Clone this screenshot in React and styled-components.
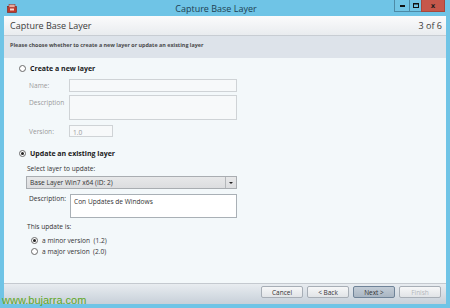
import React from "react";
import styled, { createGlobalStyle } from "styled-components";

const Global = createGlobalStyle`
  html, body { margin: 0; padding: 0; width: 450px; height: 308px; overflow: hidden; background: #6fc4e6; }
  body { font-family: "Open Sans", "Noto Sans", sans-serif; }
`;

const Frame = styled.div`
  width: 450px;
  height: 308px;
  box-sizing: border-box;
  background: #6fc4e6;
  display: flex;
  flex-direction: column;
  padding: 0 4px 4px 4px;
  position: relative;
`;

const TitleBar = styled.div`
  height: 16px;
  display: flex;
  align-items: center;
  color: #1e3f52;
  font-size: 9px;
`;

const TitleText = styled.div`
  flex: 1;
  text-align: center;
  padding-left: 20px;
`;

const AppIcon = styled.div`
  width: 10px;
  height: 9px;
  margin-left: 3px;
  display: flex;
`;

const WinButtons = styled.div`
  display: flex;
  align-self: flex-start;
  margin-right: 1px;
`;

const WinBtn = styled.div`
  width: ${(p) => p.w}px;
  height: 12px;
  box-sizing: border-box;
  background: ${(p) => (p.close ? "#c6574a" : "#72c5e5")};
  border: 1px solid ${(p) => (p.close ? "#a8473c" : "#4d8aa6")};
  border-top: none;
  margin-left: -1px;
  display: flex;
  align-items: center;
  justify-content: center;
  color: #1d1d1d;
  font-size: 7px;
  font-weight: bold;
  font-family: "DejaVu Sans", sans-serif;
`;

const Panel = styled.div`
  flex: 1;
  display: flex;
  flex-direction: column;
  background: #f3f8fa;
  min-height: 0;
`;

const Header = styled.div`
  height: 19px;
  display: flex;
  align-items: center;
  justify-content: space-between;
  padding: 0 4px 0 6px;
  background: linear-gradient(#fbfbfc, #e9ecef);
  border-bottom: 1px solid #c8cdd3;
  color: #3b3b3b;
  font-size: 9px;
`;

const SubHeader = styled.div`
  height: 22px;
  background: #dde3ea;
  padding: 5px 0 0 6px;
  box-sizing: border-box;
  font-size: 5.4px;
  font-weight: bold;
  color: #4a4a4a;
`;

const Content = styled.div`
  flex: 1;
  padding: 5px 0 0 15px;
  display: flex;
  flex-direction: column;
  font-size: 6.6px;
  color: #222;
`;

const RadioRow = styled.label`
  display: flex;
  align-items: center;
  gap: 4px;
  height: 10px;
  font-weight: ${(p) => (p.bold ? 700 : 400)};
  font-size: ${(p) => (p.bold ? 7 : 6.6)}px;
  color: ${(p) => (p.bold ? "#1a1a1a" : "#333")};
  margin-left: ${(p) => p.indent || 0}px;
  margin-top: ${(p) => p.mt || 0}px;
`;

const RadioDot = styled.span`
  width: 5px;
  height: 5px;
  border-radius: 50%;
  border: 0.8px solid #6a6a6a;
  background: #fff;
  display: flex;
  align-items: center;
  justify-content: center;
  flex-shrink: 0;
  &::after {
    content: "";
    width: 3px;
    height: 3px;
    border-radius: 50%;
    background: ${(p) => (p.checked ? "#222" : "transparent")};
  }
`;

const FieldRow = styled.div`
  display: flex;
  align-items: ${(p) => (p.top ? "flex-start" : "center")};
  margin-left: ${(p) => p.indent}px;
  margin-top: ${(p) => p.mt || 0}px;
`;

const FieldLabel = styled.div`
  width: ${(p) => p.w}px;
  color: ${(p) => (p.disabled ? "#9a9a9a" : "#333")};
  padding-top: ${(p) => (p.top ? 3 : 0)}px;
  flex-shrink: 0;
`;

const Box = styled.div`
  width: ${(p) => p.w}px;
  height: ${(p) => p.h}px;
  box-sizing: border-box;
  border: 1px solid ${(p) => (p.disabled ? "#cfd3d6" : "#a9b0b6")};
  background: ${(p) => (p.disabled ? "#f7f9fa" : "#fff")};
  color: ${(p) => (p.disabled ? "#9a9a9a" : "#333")};
  padding: 2px 3px;
  font-size: 6.6px;
`;

const Plain = styled.div`
  margin-left: ${(p) => p.indent}px;
  margin-top: ${(p) => p.mt || 0}px;
  color: #333;
`;

const Select = styled.div`
  margin-left: 7px;
  margin-top: 3px;
  width: 211px;
  height: 13px;
  box-sizing: border-box;
  border: 1px solid #a9adb1;
  background: linear-gradient(#e7e8e9, #dcdddf);
  display: flex;
  align-items: center;
  color: #333;
`;

const SelectText = styled.div`
  flex: 1;
  padding-left: 3px;
`;

const SelectArrow = styled.div`
  width: 10px;
  height: 100%;
  border-left: 1px solid #b4b7ba;
  display: flex;
  align-items: center;
  justify-content: center;
  &::after {
    content: "";
    border-left: 2px solid transparent;
    border-right: 2px solid transparent;
    border-top: 2.5px solid #222;
  }
`;

const Footer = styled.div`
  height: 18px;
  border-top: 1px solid #c4c9cf;
  background: linear-gradient(#e8ecf0, #c7d0d9);
  display: flex;
  align-items: flex-start;
  justify-content: flex-end;
  padding: 2px 5px 0 0;
  gap: 4px;
`;

const Btn = styled.div`
  width: 42px;
  height: 12px;
  box-sizing: border-box;
  border: 1px solid ${(p) => (p.primary ? "#6f8398" : "#a7aeb6")};
  border-radius: 2px;
  background: ${(p) =>
    p.primary
      ? "linear-gradient(#c2ccd6, #a9b6c3)"
      : "linear-gradient(#f6f7f8, #e1e4e7)"};
  color: ${(p) => (p.disabled ? "#b3b7bb" : "#333")};
  font-size: 6.5px;
  display: flex;
  align-items: center;
  justify-content: center;
`;

const Watermark = styled.div`
  position: absolute;
  left: 2px;
  bottom: 1px;
  color: #5ea726;
  font-family: "Liberation Sans", "DejaVu Sans", sans-serif;
  font-size: 11px;
  line-height: 13px;
`;

export default function App() {
  return (
    <>
      <Global />
      <Frame>
        <TitleBar>
          <AppIcon>
            <svg width="10" height="9" viewBox="0 0 10 9">
              <rect x="0.5" y="2.5" width="9" height="6" fill="#c0392b" stroke="#7d1f15" strokeWidth="0.6" />
              <rect x="2" y="0.5" width="6" height="3" fill="#e8a89c" stroke="#8d2b20" strokeWidth="0.5" />
              <rect x="3" y="4.5" width="4" height="2" fill="#f3d4ce" />
            </svg>
          </AppIcon>
          <TitleText>Capture Base Layer</TitleText>
          <WinButtons>
            <WinBtn w={16}>
              <svg width="5" height="2"><rect width="5" height="2" fill="#111" /></svg>
            </WinBtn>
            <WinBtn w={13}>
              <svg width="6" height="5"><rect x="0.5" y="0.5" width="5" height="4" fill="none" stroke="#111" strokeWidth="1" /><rect x="0" y="0" width="6" height="1.5" fill="#111" /></svg>
            </WinBtn>
            <WinBtn w={24} close>x</WinBtn>
          </WinButtons>
        </TitleBar>
        <Panel>
          <Header>
            <span>Capture Base Layer</span>
            <span>3 of 6</span>
          </Header>
          <SubHeader>Please choose whether to create a new layer or update an existing layer</SubHeader>
          <Content>
            <RadioRow bold>
              <RadioDot />
              Create a new layer
            </RadioRow>
            <FieldRow indent={10} mt={6}>
              <FieldLabel w={40} disabled>Name:</FieldLabel>
              <Box w={168} h={13} disabled />
            </FieldRow>
            <FieldRow indent={10} mt={3} top>
              <FieldLabel w={40} disabled top>Description</FieldLabel>
              <Box w={168} h={25} disabled />
            </FieldRow>
            <FieldRow indent={10} mt={5}>
              <FieldLabel w={40} disabled>Version:</FieldLabel>
              <Box w={44} h={12} disabled>1.0</Box>
            </FieldRow>
            <RadioRow bold mt={11}>
              <RadioDot checked />
              Update an existing layer
            </RadioRow>
            <Plain indent={8} mt={6}>Select layer to update:</Plain>
            <Select>
              <SelectText>Base Layer Win7 x64 (ID: 2)</SelectText>
              <SelectArrow />
            </Select>
            <FieldRow indent={10} mt={5} top>
              <FieldLabel w={41} top={false}>Description:</FieldLabel>
              <Box w={167} h={24}>Con Updates de Windows</Box>
            </FieldRow>
            <Plain indent={8} mt={4}>This update is:</Plain>
            <RadioRow indent={12} mt={4}>
              <RadioDot checked />
              a minor version&nbsp;&nbsp;(1.2)
            </RadioRow>
            <RadioRow indent={12} mt={1}>
              <RadioDot />
              a major version&nbsp;&nbsp;(2.0)
            </RadioRow>
          </Content>
          <Footer>
            <Btn>Cancel</Btn>
            <Btn>&lt; Back</Btn>
            <Btn primary>Next &gt;</Btn>
            <Btn disabled>Finish</Btn>
          </Footer>
        </Panel>
        <Watermark>www.bujarra.com</Watermark>
      </Frame>
    </>
  );
}
